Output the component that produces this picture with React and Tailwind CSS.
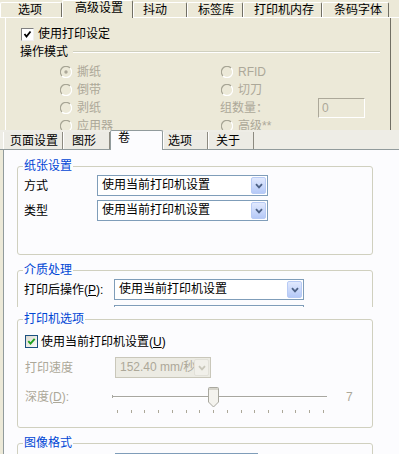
import React from "react";

const Chevron = ({ color = "#4d6185" }) => (
  <svg width="8" height="6" viewBox="0 0 8 6">
    <path d="M1 1.2 L4 4.4 L7 1.2" fill="none" stroke={color} strokeWidth="1.8" />
  </svg>
);

function Select({ text, className = "", disabled = false }) {
  return (
    <div
      className={
        "h-[21px] flex items-center border shrink-0 " +
        (disabled ? "border-[#c9c7ba] bg-[#ecebe3] " : "border-[#7f9db9] bg-white ") +
        className
      }
    >
      <span
        className={
          "flex-1 pl-[4px] whitespace-nowrap overflow-hidden leading-[19px] " +
          (disabled ? "text-[#aca899]" : "text-black")
        }
      >
        {text}
      </span>
      <div
        className={
          "w-[15px] h-[17px] mr-[1px] rounded-[2px] border flex items-center justify-center " +
          (disabled
            ? "border-[#e2e1d9] bg-[#f1f0ea]"
            : "border-[#b8cbf5] bg-gradient-to-b from-[#e1e9fd] to-[#b5c9f7]")
        }
      >
        <Chevron color={disabled ? "#c9c7ba" : "#4d6185"} />
      </div>
    </div>
  );
}

function Group({ label, className = "", children }) {
  return (
    <div className={"relative ml-[13px] w-[356px] border border-[#d0d0bf] rounded-[3px] shrink-0 " + className}>
      <span className="absolute -top-[9px] left-[5px] px-[1px] bg-[#fcfcfe] text-[#0046d5] leading-[16px] whitespace-nowrap">
        {label}
      </span>
      {children}
    </div>
  );
}

function Radio({ checked }) {
  return (
    <svg width="12" height="12" viewBox="0 0 12 12" className="shrink-0">
      <circle cx="6" cy="6" r="5.5" fill="#ece9d8" />
      <path d="M2 10 A5.5 5.5 0 0 1 10 2" fill="none" stroke="#a7a595" strokeWidth="1.2" />
      <path d="M10 2 A5.5 5.5 0 0 1 2 10" fill="none" stroke="#ffffff" strokeWidth="1.2" />
      {checked && <circle cx="6" cy="6" r="1.7" fill="#aca899" />}
    </svg>
  );
}

function RadioItem({ label, checked }) {
  return (
    <div className="h-[18px] flex items-center gap-[5px] text-[#aca899] whitespace-nowrap">
      <Radio checked={checked} />
      <span>{label}</span>
    </div>
  );
}

const topTabs = [
  { t: "选项", w: 62, pl: 17 },
  { t: "高级设置", w: 71, pl: 12, sel: true },
  { t: "抖动", w: 54, pl: 9 },
  { t: "标签库", w: 56, pl: 10 },
  { t: "打印机内存", w: 79, pl: 10 },
  { t: "条码字体", w: 67, pl: 11 },
];

const midTabs = [
  { t: "页面设置", w: 60, pl: 6 },
  { t: "图形", w: 47, pl: 8 },
  { t: "卷", w: 53, pl: 7, sel: true },
  { t: "选项", w: 45, pl: 4 },
  { t: "关于", w: 46, pl: 7 },
];

function Slider() {
  const ticks = [];
  for (let i = 0; i < 16; i++) ticks.push(5 + i * 13.73);
  return (
    <svg width="216" height="28" viewBox="0 0 216 28" className="shrink-0">
      <rect x="0" y="9" width="215" height="1" fill="#a8a7a0" />
      <rect x="0" y="10" width="215" height="1" fill="#ffffff" />
      <rect x="0" y="8" width="1" height="3" fill="#a8a7a0" />
      {ticks.map((x, i) => (
        <rect key={i} x={Math.round(x)} y="23" width="1" height="3" fill="#aca899" />
      ))}
      <path
        d="M96.5 1.5 Q96.5 0.5 97.5 0.5 H105.5 Q106.5 0.5 106.5 1.5 V15 L101.5 20 L96.5 15 Z"
        fill="#f4f3ee"
        stroke="#a9a89f"
      />
      <rect x="97" y="1" width="9" height="2" fill="#d6d4cb" />
    </svg>
  );
}

export default function App() {
  return (
    <div className="w-[399px] h-[454px] overflow-hidden flex flex-col text-[12px] [font-family:'Liberation_Sans','Noto_Sans_CJK_SC',sans-serif] text-black">
      {/* Top classic dialog */}
      <div className="h-[130px] shrink-0 overflow-hidden bg-[#ece9d8] flex flex-col">
        <div className="h-[18px] shrink-0 flex items-end border-b border-white">
          {topTabs.map((tab) =>
            tab.sel ? (
              <div
                key={tab.t}
                style={{ width: tab.w, paddingLeft: tab.pl }}
                className="relative z-10 -mb-px h-[18px] bg-[#ece9d8] border-t border-l border-white border-r border-r-[#716f64] rounded-t-[2px] leading-[14px] whitespace-nowrap"
              >
                {tab.t}
              </div>
            ) : (
              <div
                key={tab.t}
                style={{ width: tab.w, paddingLeft: tab.pl }}
                className="h-[15px] bg-[#ece9d8] border-t border-l border-white border-r border-r-[#716f64] rounded-t-[2px] leading-[15px] whitespace-nowrap"
              >
                {tab.t}
              </div>
            )
          )}
        </div>
        <div className="flex-1 ml-[5px] w-[386px] border-l border-white border-r border-r-[#716f64] flex flex-col">
          <div className="mt-[8px] h-[16px] flex items-center gap-[4px] pl-[15px]">
            <div className="w-[13px] h-[13px] bg-white border border-t-[#808080] border-l-[#808080] border-b-[#f0f0f0] border-r-[#f0f0f0] flex items-center justify-center">
              <svg width="9" height="9" viewBox="0 0 9 9">
                <path d="M1.5 4 L3.5 6.5 L7.5 1.5" fill="none" stroke="#000" strokeWidth="1.8" />
              </svg>
            </div>
            <span>使用打印设定</span>
          </div>
          <div className="mt-[2px] h-[16px] flex items-center pl-[14px]">
            <span className="whitespace-nowrap">操作模式</span>
            <div className="flex-1 ml-[5px] mr-[10px] border-t border-[#d0d0bf] border-b border-b-white" />
          </div>
          <div className="mt-[3px] grid grid-cols-[160px_1fr] pl-[54px]">
            <RadioItem label="撕纸" checked />
            <div className="pl-[1px]">
              <RadioItem label="RFID" />
            </div>
            <RadioItem label="倒带" />
            <div className="pl-[1px]">
              <RadioItem label="切刀" />
            </div>
            <RadioItem label="剥纸" />
            <div className="h-[18px] flex items-center text-[#aca899]">
              <span className="w-[98px]">组数量：</span>
              <div className="w-[47px] h-[20px] border border-t-[#aca899] border-l-[#aca899] border-b-white border-r-white bg-[#ece9d8] pl-[3px] leading-[18px] text-[#aca899]">
                0
              </div>
            </div>
            <RadioItem label="应用器" />
            <div className="pl-[1px]">
              <RadioItem label="高级**" />
            </div>
          </div>
        </div>
      </div>

      {/* Middle XP dialog */}
      <div className="h-[177px] shrink-0 overflow-hidden bg-[#ece9d8] flex flex-col">
        <div className="h-[20px] shrink-0 flex items-end pl-[3px] bg-[#eeede6] border-b border-[#919b9c]">
          {midTabs.map((tab) =>
            tab.sel ? (
              <div
                key={tab.t}
                style={{ width: tab.w, paddingLeft: tab.pl }}
                className="relative z-10 -mb-px h-[20px] bg-[#fcfcfe] border-t border-x border-[#919b9c] rounded-t-[2px] leading-[14px] whitespace-nowrap"
              >
                {tab.t}
              </div>
            ) : (
              <div
                key={tab.t}
                style={{ width: tab.w, paddingLeft: tab.pl }}
                className="h-[17px] bg-[#ecebe4] border-l border-white border-r border-r-[#8c8a80] leading-[19px] whitespace-nowrap"
              >
                {tab.t}
              </div>
            )
          )}
        </div>
        <div className="flex-1 ml-[3px] border-l border-[#919b9c] bg-[#fcfcfe] flex flex-col pt-[16px]">
          <Group label="纸张设置" className="h-[89px] pt-[8px] pl-[6px] flex flex-col gap-[4px]">
            <div className="flex items-center">
              <span className="w-[73px]">方式</span>
              <Select text="使用当前打印机设置" className="w-[171px]" />
            </div>
            <div className="flex items-center">
              <span className="w-[73px]">类型</span>
              <Select text="使用当前打印机设置" className="w-[171px]" />
            </div>
          </Group>
          <Group label="介质处理" className="mt-[15px] h-[60px] pt-[8px] pl-[6px] flex flex-col gap-[5px]">
            <div className="flex items-center">
              <span className="w-[90px] whitespace-nowrap">
                打印后操作(<span className="underline">P</span>):
              </span>
              <Select text="使用当前打印机设置" className="w-[190px]" />
            </div>
            <div className="flex items-center">
              <span className="w-[90px]" />
              <Select text="" className="w-[190px]" />
            </div>
          </Group>
        </div>
      </div>

      {/* Bottom XP dialog */}
      <div className="flex-1 overflow-hidden bg-[#ece9d8] pl-[3px]">
        <div className="h-full border-l border-[#919b9c] bg-[#fcfcfe] flex flex-col pt-[12px]">
          <Group label="打印机选项" className="h-[109px] pt-[15px] pl-[7px] flex flex-col">
            <div className="h-[13px] flex items-center gap-[3px]">
              <div className="w-[13px] h-[13px] border border-[#1c5180] bg-gradient-to-br from-[#dcdad0] to-[#fbfbf9] flex items-center justify-center">
                <svg width="9" height="9" viewBox="0 0 9 9">
                  <path d="M1.3 4.2 L3.5 6.6 L7.7 1.8" fill="none" stroke="#21a121" strokeWidth="1.9" />
                </svg>
              </div>
              <span className="whitespace-nowrap">
                使用当前打印机设置(<span className="underline">U</span>)
              </span>
            </div>
            <div className="mt-[9px] flex items-center">
              <span className="w-[90px] text-[#aca899]">打印速度</span>
              <Select text="152.40 mm/秒" className="w-[96px]" disabled />
            </div>
            <div className="mt-[9px] flex items-start">
              <span className="w-[87px] text-[#aca899] leading-[20px] whitespace-nowrap">
                深度(<span className="underline">D</span>):
              </span>
              <Slider />
              <span className="ml-[18px] text-[#aca899] leading-[20px]">7</span>
            </div>
          </Group>
          <Group label="图像格式" className="mt-[15px] h-[40px] pt-[9px] pl-[7px]">
            <div className="flex items-center">
              <span className="w-[90px]" />
              <Select text="" className="w-[143px]" />
            </div>
          </Group>
        </div>
      </div>
    </div>
  );
}
